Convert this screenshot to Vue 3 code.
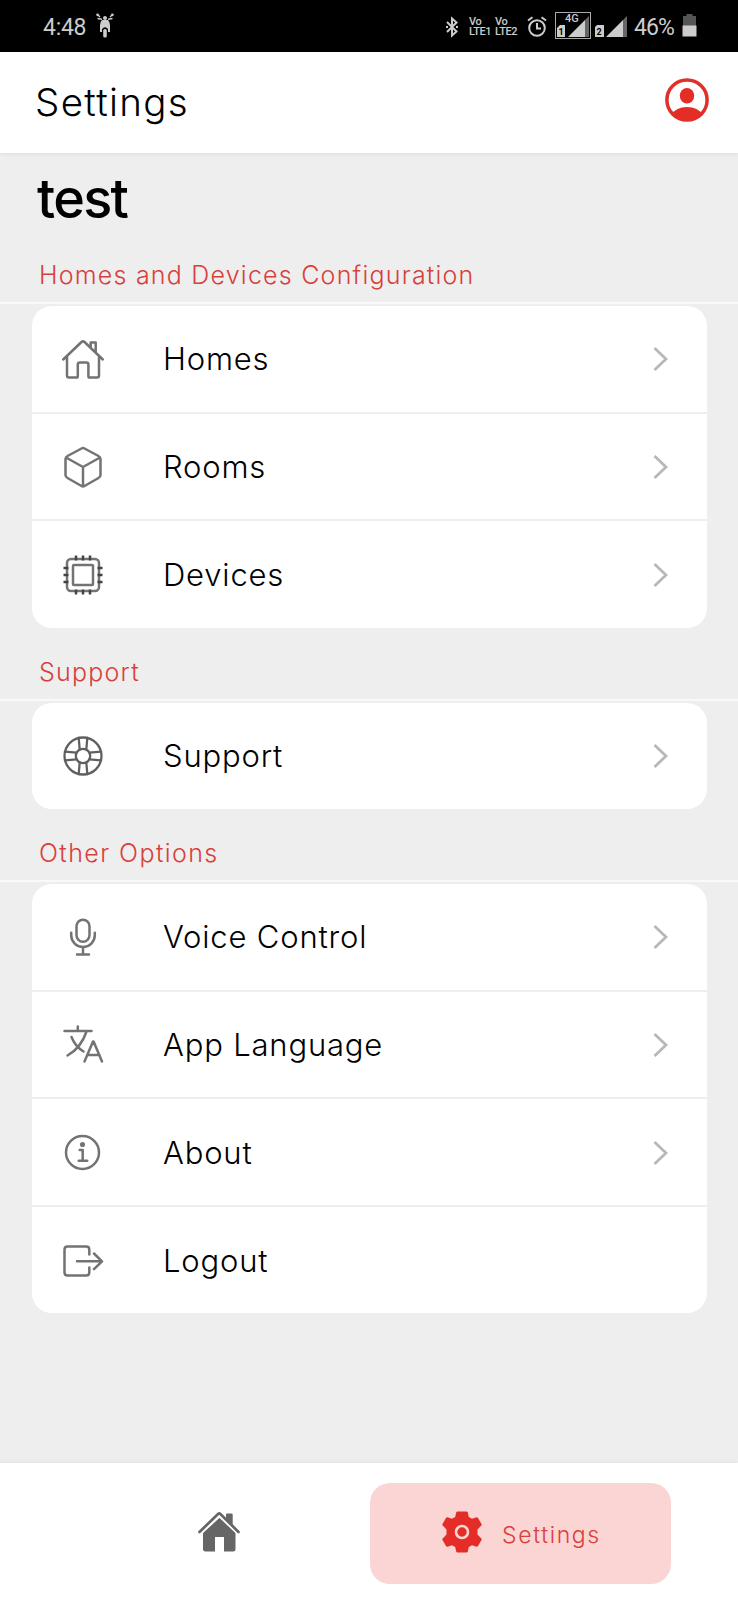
<script setup>
const sections = [
  { title: 'Homes and Devices Configuration', cls: 's1', rows: [['Homes', 'home'], ['Rooms', 'cube'], ['Devices', 'chip']] },
  { title: 'Support', cls: 's2', rows: [['Support', 'ring']] },
  { title: 'Other Options', cls: 's3', rows: [['Voice Control', 'mic'], ['App Language', 'lang'], ['About', 'info'], ['Logout', 'logout']] },
]
</script>

<template>
  <div class="screen">
    <div class="status">
      <span class="time">4:48</span>
      <svg class="moto" width="18" height="25" viewBox="0 0 18 25">
        <g fill="none" stroke="#ccc" stroke-width="1.400"><path d="M6 6.300L1.500 5.500M12 6.300l4.500-.8M2 2l2 2M16 2l-2 2" /></g>
        <g fill="#ccc"><circle cx="1.600" cy="1.800" r="1.400" /><circle cx="16.400" cy="1.800" r="1.400" /><circle cx="9" cy="5" r="2" /><path d="M6 7h6q2 2 2 5v7h-2v-3q-3-3.500-6 0v3H4v-7q0-3 2-5z" /><rect x="7.200" y="16" width="3.600" height="8.500" rx="1.600" /></g>
      </svg>
      <div class="grow"></div>
      <svg class="bt" width="12" height="22" viewBox="0 0 12 22"><path d="M1 6l9.500 9.500L6 19.500V2.500l4.500 4L1 16" fill="none" stroke="#ccc" stroke-width="2" /><path d="M0 11h2M10 11h2" stroke="#ccc" stroke-width="2" /></svg>
      <div class="volte">Vo<br>LTE1</div>
      <div class="volte">Vo<br>LTE2</div>
      <svg class="alarm" width="20" height="21" viewBox="0 0 20 21"><g fill="none" stroke="#ccc" stroke-width="2"><circle cx="10" cy="12" r="7.800" /><path d="M10 7v5.500h4M1 4.500l4.500-3.300M19 4.500l-4.500-3.300" /></g></svg>
      <div class="boxed">
        <span class="g4">4G</span>
        <svg width="34" height="25" viewBox="0 0 34 25"><path d="M12 24L29 7v17z" fill="#ccc" /><path d="M29 7l4-4v21h-4z" fill="#666" /><path d="M1 15l3-3h5v12H1z" fill="#ccc" /><text x="2.500" y="22" class="simno">1</text></svg>
      </div>
      <svg class="sim2" width="33" height="23" viewBox="0 0 33 23"><path d="M11 22L28 5v17z" fill="#ccc" /><path d="M28 5l4-4v21h-4z" fill="#666" /><path d="M0 12l2-2h7v12H0z" fill="#ccc" /><text x="1.500" y="20" class="simno">2</text></svg>
      <span class="pct">46%</span>
      <svg class="bat" width="15" height="23" viewBox="0 0 15 23"><path d="M1 2h3.500V0h6v2H14v10H1z" fill="#555" /><path d="M.5 11.500h14V22.500H.5z" fill="#ccc" /></svg>
    </div>

    <header class="header">
      <h1>Settings</h1>
      <svg class="avatar" width="44" height="44" viewBox="0 0 44 44">
        <clipPath id="disc"><circle cx="22" cy="22" r="20" /></clipPath>
        <circle cx="22" cy="22" r="20.100" fill="none" stroke="#e0302b" stroke-width="3.500" />
        <ellipse cx="22" cy="17.700" rx="7.200" ry="7.800" fill="#e52d27" />
        <path clip-path="url(#disc)" d="M6 37Q11 29 22 29T38 37V44H6z" fill="#e52d27" />
      </svg>
    </header>

    <main>
      <h2>test</h2>
      <section v-for="s in sections" :key="s.title" :class="s.cls">
        <h3><span>{{ s.title }}</span></h3>
        <div class="card">
          <div v-for="[label, icon] in s.rows" :key="label" class="row">
            <svg class="icon" width="44" height="44" viewBox="0 0 44 44">
              <g v-if="icon === 'home'">
                <path d="M2.200 22.500L20.500 5q1.500-1.200 3 0L41.800 22.500M29.700 10.300V5.500h5V15.500M6 19.500V38.500q0 2 2 2h7.500q1.300 0 1.300-1.300V27.500q0-2 2-2h6.600q2 0 2 2v11.700q0 1.300 1.300 1.300H36q2 0 2-2V19.500" />
              </g>
              <g v-else-if="icon === 'cube'">
                <path d="M20.500 3.500q1.500-.8 3 0l14 7.500q2 1 2 3v16q0 2-2 3l-14 8q-1.500.8-3 0l-14-8q-2-1-2-3V14q0-2 2-3zM5 12.500l17 9.500 17-9.500M22 22v19" />
              </g>
              <g v-else-if="icon === 'chip'">
                <rect x="6" y="6" width="32" height="32" rx="4" /><rect x="12" y="12" width="20" height="20" rx="1" />
                <path class="dark" d="M15 2.500v5M22 2.500v5M29 2.500v5M15 36.500v5M22 36.500v5M29 36.500v5M2.500 15h5M2.500 22h5M2.500 29h5M36.500 15h5M36.500 22h5M36.500 29h5" />
              </g>
              <g v-else-if="icon === 'ring'" class="ring">
                <circle cx="22" cy="22" r="18.500" /><circle cx="22" cy="22" r="7.200" />
                <path d="M17.700 4l1 11.500M26.300 4l-1 11.500M17.700 40l1-11.500M26.300 40l-1-11.500M4 17.700l11.500 1M4 26.300l11.500-1M40 17.700l-11.500 1M40 26.300l-11.500-1" />
              </g>
              <g v-else-if="icon === 'mic'">
                <rect x="15.500" y="4.700" width="13" height="22" rx="6.500" /><path d="M10.200 17.700v2.500a11.800 11.800 0 0 0 23.600 0V17.700M22 32.200V39.500M16 39.500h12" />
              </g>
              <g v-else-if="icon === 'lang'">
                <path d="M3.500 8h27M16.800 3.500v4.500M25.500 8.500Q20 25 6.500 32.500M10.500 14Q14 23 22.500 28.500M23.500 38.500l8.500-20h.6L41 38.500M26.500 32h12" />
              </g>
              <g v-else-if="icon === 'info'">
                <circle cx="21.500" cy="21.500" r="16.500" /><path d="M18.700 19h3V29.800M17.700 29.800h8.500" /><circle cx="21.500" cy="13.500" r="1.300" class="dot" />
              </g>
              <g v-else>
                <path d="M28.300 15.500V10.500q0-3-3-3H6.500q-3 0-3 3v23q0 3 3 3h18.800q3 0 3-3V28.500M16 22.300h24.500M33 14.500l8 7.800-8 7.800" />
              </g>
            </svg>
            <span class="label">{{ label }}</span>
            <svg v-if="icon !== 'logout'" class="chev" width="18" height="28" viewBox="0 0 18 28"><path d="M3.500 3l11.500 11L3.500 25" /></svg>
          </div>
        </div>
      </section>
    </main>

    <nav class="nav">
      <svg class="nav-home" width="44" height="42" viewBox="0 0 44 42">
        <path d="M22 5L38.500 21V38q0 2.500-2.500 2.500H27V26h-9v14.500H8.500Q6 40.500 6 38V21z" fill="#666" />
        <path d="M2.500 21.500L21.500 4q1-.8 2 0L42 21.500" fill="none" stroke="#fff" stroke-width="5.600" />
        <path d="M29 3.500q0-1 1-1h4.500q1.200 0 1.200 1.200V14.500L29 8.500z" fill="#666" />
        <path d="M2.500 21L21 3q1.200-1 2.400 0L41.500 21" fill="none" stroke="#666" stroke-width="2.700" stroke-linecap="round" />
      </svg>
      <div class="pill">
        <svg class="gear" width="40" height="42" viewBox="0 0 40 42">
          <path d="M15.500.5h9q1 0 1.300 1l1 4.500 3.200 1.800 4.500-1.500q1-.3 1.500.6l3.500 6q.6 1-.2 1.700L35.500 18.500v5l3.800 3.900q.8.700.2 1.700l-3.500 6q-.5.900-1.500.6L30 34.200 26.800 36l-1 4.500q-.3 1-1.300 1h-9q-1 0-1.300-1l-1-4.500L10 34.200l-4.500 1.500q-1 .3-1.500-.6l-3.500-6q-.6-1 .2-1.700L4.500 23.500v-5L.7 14.600q-.8-.7-.2-1.700l3.500-6q.5-.9 1.500-.6L10 7.800 13.200 6l1-4.500q.3-1 1.300-1z" fill="#e52d27" />
          <circle cx="20" cy="21" r="6" fill="none" stroke="#fbd5d3" stroke-width="2.600" />
        </svg>
        <span>Settings</span>
      </div>
    </nav>
  </div>
</template>

<style>
html, body { margin: 0; background: #eee; }
</style>
<style scoped>
.screen { width: 738px; height: 1600px; background: #eee; display: flex; flex-direction: column; overflow: hidden; font-family: Inter, Roboto, sans-serif; font-weight: 300; color: #000; }
.screen * { box-sizing: border-box; }
h1, h2, h3 { margin: 0; font-weight: 300; white-space: nowrap; }
.status { height: 52px; flex: none; background: #000; color: #ccc; display: flex; align-items: flex-start; padding-left: 43px; font-family: Roboto, sans-serif; font-weight: 400; }
.time { font-size: 23px; line-height: 27px; margin-top: 14px; width: 53px; letter-spacing: -.3px; }
.moto { margin-top: 13px; }
.grow { flex: 1; }
.bt { margin-top: 16px; margin-right: 11px; }
.volte { font-size: 11px; line-height: 10px; margin-top: 17px; width: 26px; font-weight: 500; letter-spacing: -.4px; }
.alarm { margin-top: 16px; margin-left: 6px; margin-right: 8px; }
.boxed { width: 36px; height: 27px; margin-top: 12px; border: 1px solid #aaa; position: relative; }
.boxed svg { display: block; }
.g4 { position: absolute; left: 9px; top: 0; font-size: 11px; line-height: 11px; font-weight: 500; }
.simno { font: 700 9px Roboto, sans-serif; fill: #000; }
.sim2 { margin: 15px 6px 0 4px; }
.pct { font-size: 23px; line-height: 27px; margin-top: 14px; width: 48px; white-space: nowrap; letter-spacing: -.9px; }
.bat { margin-top: 14px; margin-right: 41px; }
.header { height: 101px; flex: none; background: #fff; display: flex; justify-content: space-between; padding: 26px 29px 0 35px; box-shadow: 0 1px 4px rgba(0,0,0,.07); position: relative; }
h1 { font-size: 38.500px; line-height: 48px; letter-spacing: 1.300px; }
main { flex: 1; }
h2 { font-size: 54px; line-height: 64px; font-weight: 500; letter-spacing: -1.700px; margin: 14px 0 0 37px; height: 63px; }
h3 { font-size: 25px; line-height: 30px; color: #d8403b; letter-spacing: 1.220px; padding-left: 39px; border-bottom: 2px solid #f9f9f9; display: flex; align-items: flex-end; }
h3 span { margin-bottom: 12px; }
.s1 h3 { height: 74px; }
.s2 h3 { height: 73px; }
.s3 h3 { height: 73px; letter-spacing: 1.400px; }
.card { margin: 2px 31px 0 32px; background: #fff; border-radius: 20px; }
.row { height: 107.600px; display: flex; align-items: center; padding: 1px 0 0 29px; border-bottom: 2px solid #eee; }
.row:last-child { border-bottom: 0; height: 106.500px; }
.icon { flex: none; }
.icon g { fill: none; stroke: #737373; stroke-width: 2.500; stroke-linecap: round; stroke-linejoin: round; }
.icon .dark { stroke: #444; stroke-linecap: butt; }
.icon .ring { stroke: #606060; stroke-width: 2.300; }
.icon .dot { fill: #6e6e6e; }
.label { margin-left: 58px; font-size: 31px; line-height: 38px; flex: 1; letter-spacing: .820px; white-space: nowrap; }
.chev { margin-right: 38px; flex: none; fill: none; stroke: #b8b8b8; stroke-width: 2.800; }
.nav { height: 137px; flex: none; background: #fff; display: flex; align-items: flex-start; box-shadow: 0 -1px 4px rgba(0,0,0,.05); }
.nav-home { margin: 48px 0 0 197px; }
.pill { margin: 20px 0 0 129px; width: 301px; height: 101px; border-radius: 20px; background: #fbd5d3; display: flex; align-items: flex-start; padding-left: 72px; }
.gear { margin-top: 28px; flex: none; }
.pill span { margin: 37px 0 0 20px; font-size: 23px; line-height: 30px; letter-spacing: 1.650px; color: #d8403b; }
</style>
